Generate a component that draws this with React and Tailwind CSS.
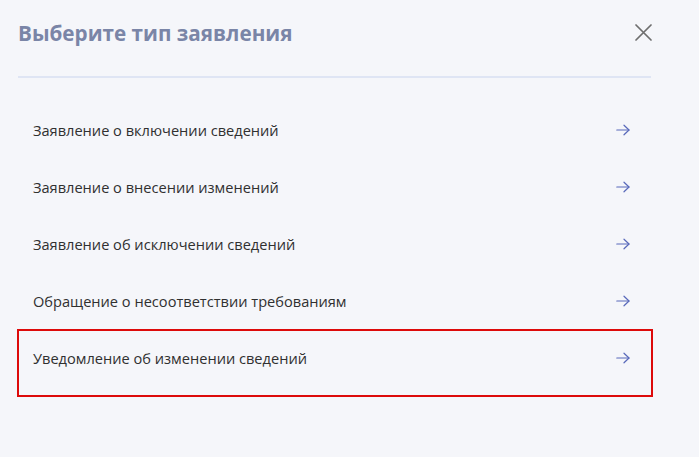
import React from "react";

const items = [
  "Заявление о включении сведений",
  "Заявление о внесении изменений",
  "Заявление об исключении сведений",
  "Обращение о несоответствии требованиям",
];

function Arrow() {
  return (
    <svg width="14" height="12" viewBox="0 0 14 12" fill="none" stroke="#5868ba" strokeWidth="1.2" strokeLinecap="round" strokeLinejoin="round">
      <path d="M0.8 6H13" />
      <path d="M8 1.2L13 6L8 10.8" />
    </svg>
  );
}

export default function App() {
  return (
    <div className="min-h-[457px] w-full bg-[#f5f6fa] pt-[19px]" style={{ fontFamily: '"Open Sans", "Noto Sans", sans-serif' }}>
      <div className="ml-[18px] w-[633px]">
        <div className="flex h-[28px] items-start justify-between">
          <h1 className="text-[20.7px] font-bold leading-[28px] text-[#7a85a7]">Выберите тип заявления</h1>
          <svg width="17" height="17" viewBox="0 0 17 17" className="mr-[-1px] mt-[5px]" fill="none" stroke="#6e6e6e" strokeWidth="1.7" strokeLinecap="round">
            <path d="M1 1L16 16M16 1L1 16" />
          </svg>
        </div>
        <div className="mt-[29px] h-[2px] bg-[#dfe5f4]" />
        <div className="mt-[23px]">
          {items.map((t) => (
            <div key={t} className="flex h-[57px] items-center justify-between pl-[15px] pr-[21px]">
              <span className="text-[14.6px] leading-[20px] text-[#303030]">{t}</span>
              <Arrow />
            </div>
          ))}
          <div className="ml-[-1px] mr-[-2px] flex items-start justify-between border-2 border-[#dd0a0a] pb-[27px] pl-[14px] pr-[21px] pt-[17px]">
            <span className="text-[14.6px] leading-[20px] text-[#303030]">Уведомление об изменении сведений</span>
            <div className="flex h-[20px] items-center">
              <Arrow />
            </div>
          </div>
        </div>
      </div>
    </div>
  );
}
